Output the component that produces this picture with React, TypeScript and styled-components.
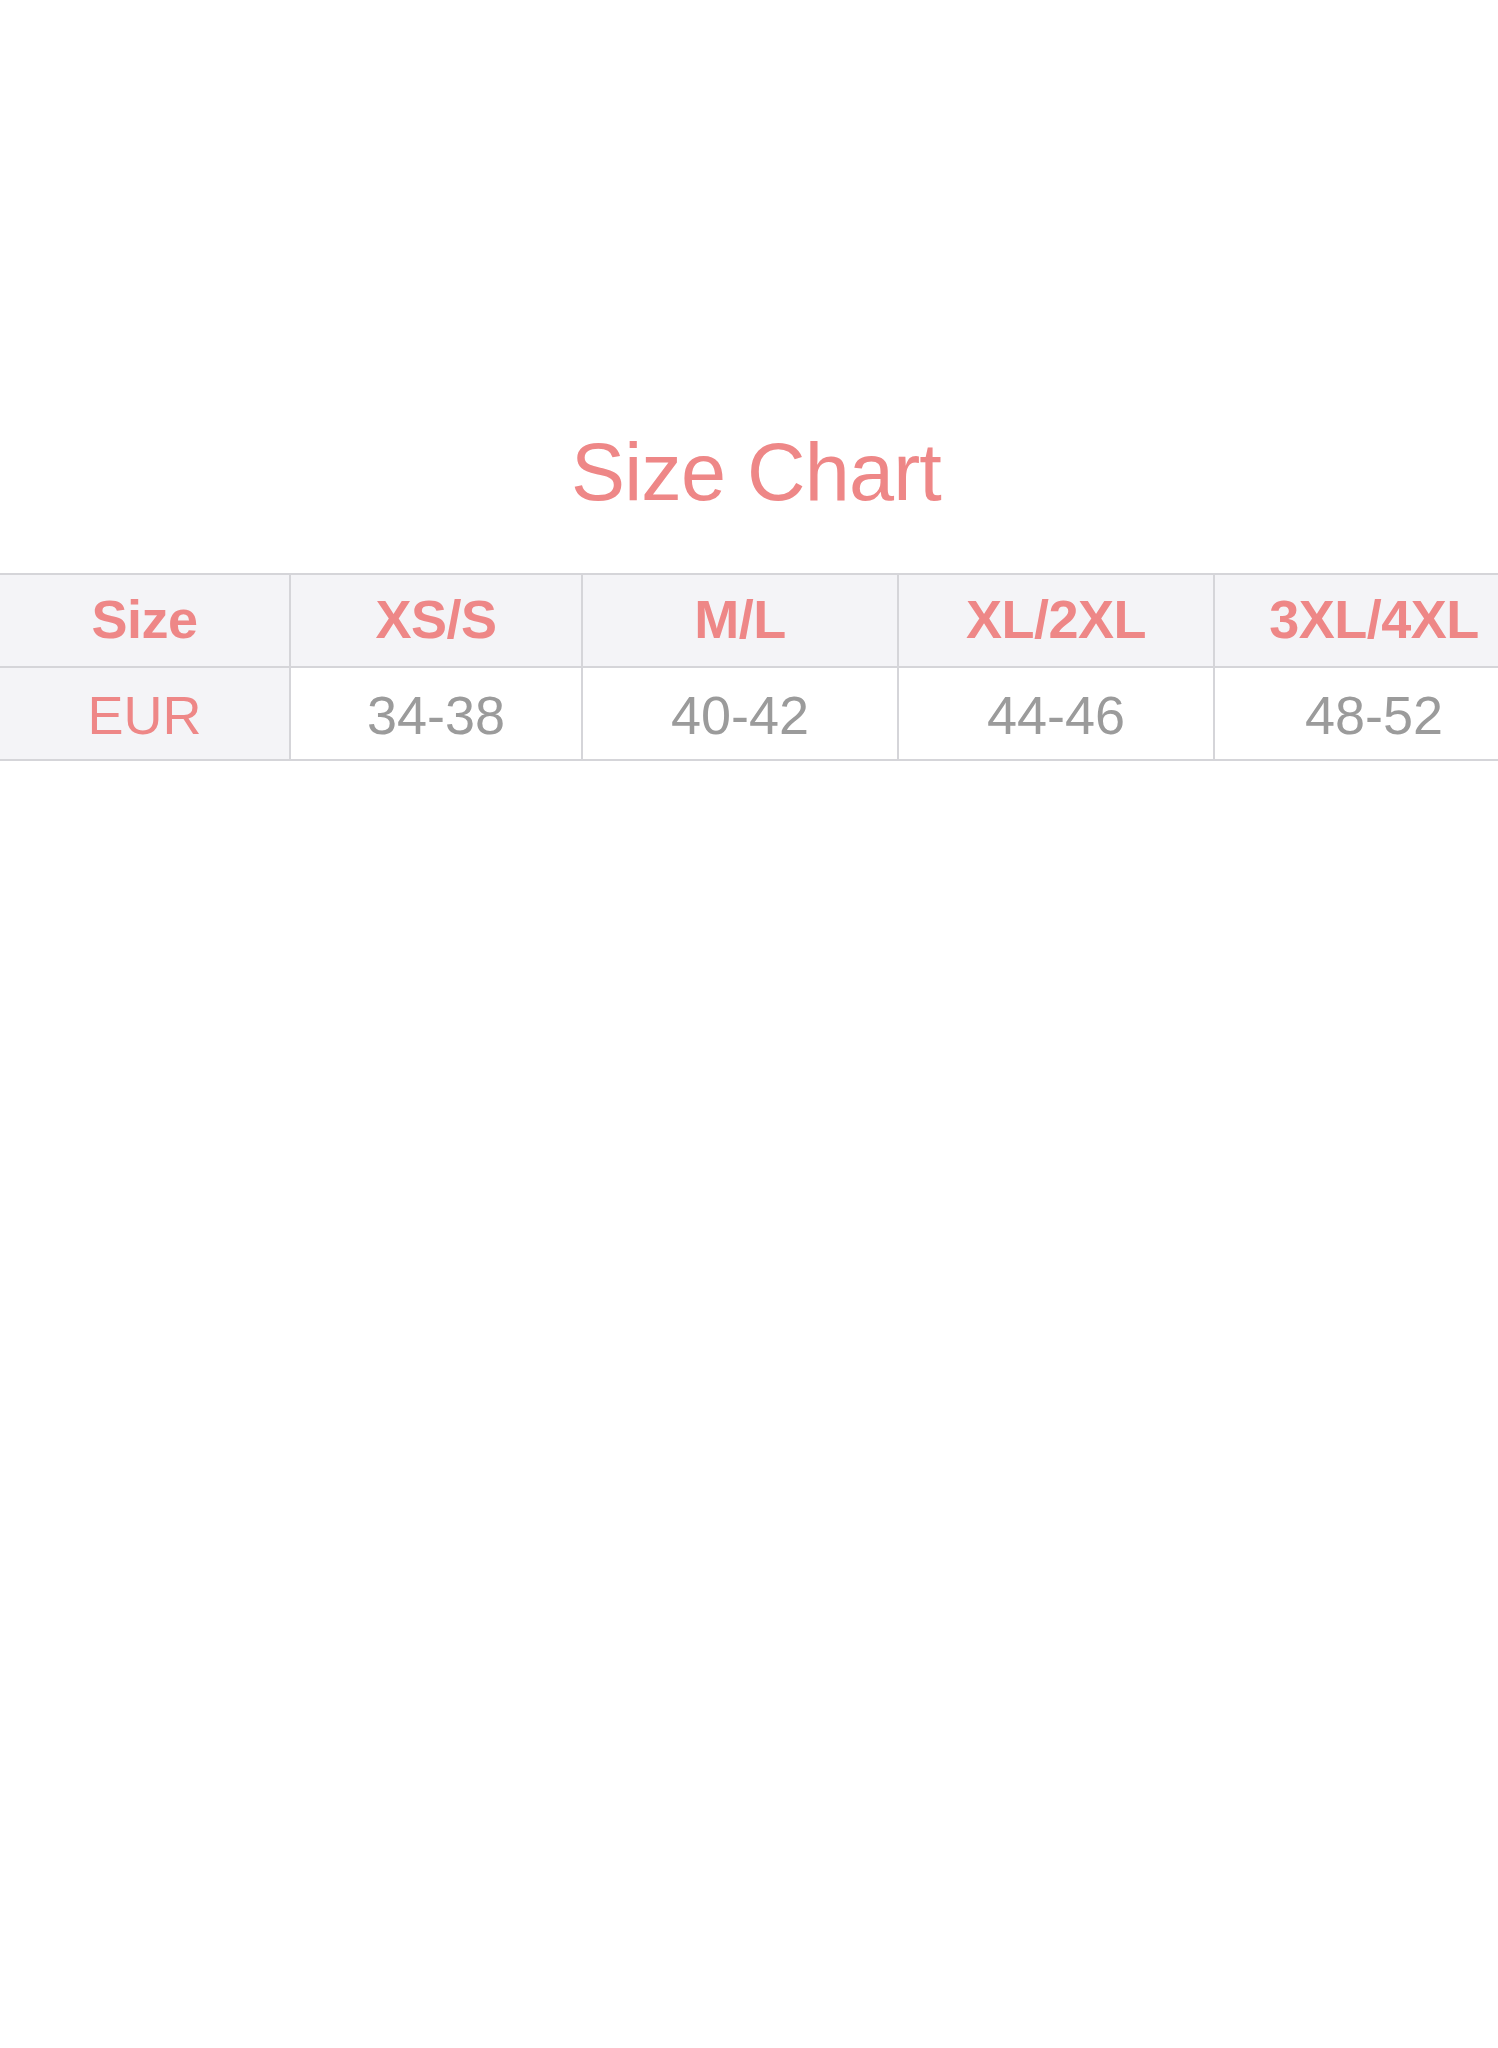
import React from 'react';
import styled, { createGlobalStyle } from 'styled-components';

const GlobalStyle = createGlobalStyle`
  html, body {
    margin: 0;
    padding: 0;
    background: #ffffff;
  }
  body {
    font-family: 'Liberation Sans', Arial, sans-serif;
  }
`;

const PINK = '#ee8787';
const GREY_TEXT = '#9b9b9b';
const LINE = '#d5d5d9';
const SHADE = '#f4f4f7';

const columns = [291, 292, 316, 316, 320];

const sizes = ['XS/S', 'M/L', 'XL/2XL', '3XL/4XL'];
const eur = ['34-38', '40-42', '44-46', '48-52'];

const Page = styled.div`
  width: 1498px;
  height: 2048px;
  overflow: hidden;
  padding-top: 432px;
  box-sizing: border-box;
`;

const Title = styled.h1`
  margin: 0 0 61px 0;
  padding-left: 14px;
  text-align: center;
  font-size: 81px;
  line-height: 80px;
  font-weight: 400;
  letter-spacing: -0.8px;
  color: ${PINK};
`;

const Table = styled.div`
  display: grid;
  grid-template-columns: ${columns.map((w) => `${w}px`).join(' ')};
  border-top: 2px solid ${LINE};
  width: max-content;
`;

interface CellProps {
  $shaded?: boolean;
  $head?: boolean;
  $accent?: boolean;
}

const Cell = styled.div<CellProps>`
  height: 93px;
  display: flex;
  align-items: center;
  justify-content: center;
  padding: ${(p) => (p.$head ? '0 0 4px' : '3px 0 0')};
  box-sizing: border-box;
  border-right: 2px solid ${LINE};
  border-bottom: 2px solid ${LINE};
  background: ${(p) => (p.$shaded ? SHADE : '#ffffff')};
  font-size: 54px;
  font-weight: ${(p) => (p.$head ? 700 : 400)};
  color: ${(p) => (p.$accent ? PINK : GREY_TEXT)};
  letter-spacing: ${(p) => (p.$head ? '-0.5px' : '0')};
`;

const App = (): JSX.Element => {
  return (
    <Page>
      <GlobalStyle />
      <Title>Size Chart</Title>
      <Table>
        <Cell $shaded $head $accent>
          Size
        </Cell>
        {sizes.map((s) => (
          <Cell key={s} $shaded $head $accent>
            {s}
          </Cell>
        ))}
        <Cell $shaded $accent>
          EUR
        </Cell>
        {eur.map((v) => (
          <Cell key={v}>{v}</Cell>
        ))}
      </Table>
    </Page>
  );
};

export default App;
